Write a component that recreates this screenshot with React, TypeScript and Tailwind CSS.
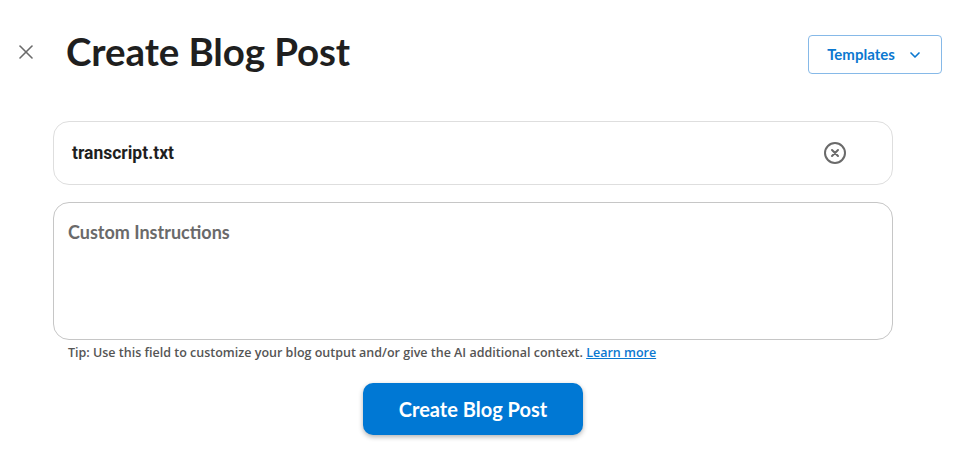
import { X, ChevronDown } from "lucide-react"

export default function App() {
  return (
    <div className="w-[966px] h-[474px] bg-white font-['Lato',sans-serif] text-[#1f1f1f]">
      {/* header */}
      <div className="flex items-start pt-[34px] pl-[14px] pr-[24px]">
        <button className="mt-[6px] w-6 h-6 flex items-center justify-center text-[#6b6b6b]">
          <X className="w-6 h-6" strokeWidth={1.6} />
        </button>
        <h1 className="ml-[28px] text-[38.5px] leading-[38px] font-bold tracking-[-0.1px] -mt-[2px]">Create Blog Post</h1>
        <button className="ml-auto h-[39px] w-[134px] mt-[1px] flex items-center justify-center gap-[12px] border border-[#86b9e8] rounded-[4px] text-[#0b78d0] text-[15px] font-bold">
          Templates
          <ChevronDown className="w-4 h-4" strokeWidth={2.5} />
        </button>
      </div>

      {/* form */}
      <div className="ml-[53px] w-[840px] mt-[47px]">
        <div className="h-[64px] border border-[#dedede] rounded-[16px] flex items-center pl-[18px] pr-[45px]">
          <span className="font-['Roboto',sans-serif] font-bold text-[17.5px] text-[#1f1f1f]">transcript.txt</span>
          <svg className="ml-auto" width="24" height="24" viewBox="0 0 24 24" fill="none" stroke="#6a6a6a" strokeWidth="2" strokeLinecap="round">
            <circle cx="12" cy="12" r="10" />
            <path d="M9 9l6 6M15 9l-6 6" />
          </svg>
        </div>
        <textarea
          placeholder="Custom Instructions"
          className="mt-[17px] block w-full h-[138px] border border-[#c6c6c6] rounded-[16px] px-[14px] py-[16px] text-[18px] font-bold resize-none outline-none placeholder:text-[#6a6a6a]"
        />
        <p className="mt-[4px] pl-[15px] font-['Open_Sans',sans-serif] text-[12.5px] font-semibold text-[#555]">
          Tip: Use this field to customize your blog output and/or give the AI additional context.{" "}
          <a className="text-[#0b78d0] underline">Learn more</a>
        </p>
      </div>

      <div className="flex justify-center mt-[20px] pr-[20px]">
        <button className="w-[220px] h-[52px] rounded-[10px] bg-[#0078d4] text-white text-[20px] font-bold shadow-[0_2px_5px_rgba(0,0,0,0.3)]">
          Create Blog Post
        </button>
      </div>
    </div>
  )
}
